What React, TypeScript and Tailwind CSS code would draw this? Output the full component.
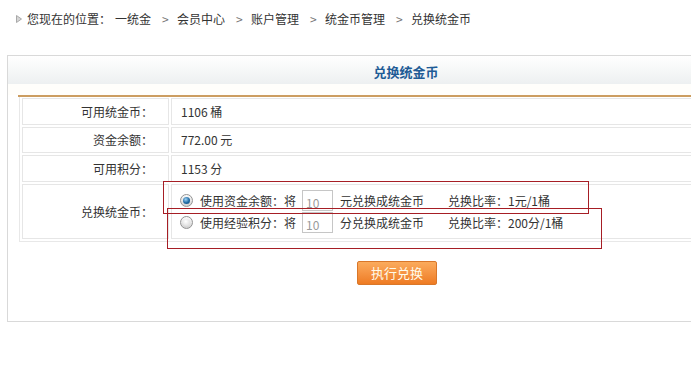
import React from "react";

function Radio({ checked }: { checked?: boolean }) {
  return (
    <span className="w-[13px] h-[13px] rounded-full border border-[#939393] bg-gradient-to-b from-[#fbfbfb] to-[#d2d2d2] flex items-center justify-center shrink-0">
      {checked ? (
        <span className="w-[7px] h-[7px] rounded-full bg-[radial-gradient(circle_at_40%_35%,#9fd3f5,#1f6aa3_55%,#154c78)]" />
      ) : (
        <span className="w-[7px] h-[7px] rounded-full bg-[radial-gradient(circle_at_40%_35%,#ffffff,#e2e2e2_70%)]" />
      )}
    </span>
  );
}

function Sep() {
  return <span className="w-[6px] ml-[11px] mr-[9px] text-center text-[#777]">&gt;</span>;
}

function ExchangeLine({
  checked,
  label,
  unit,
  rate,
}: {
  checked?: boolean;
  label: string;
  unit: string;
  rate: string;
}) {
  return (
    <div className="h-[22px] flex items-center">
      <Radio checked={checked} />
      <span className="ml-[7px] w-[96px] whitespace-nowrap">{label}</span>
      <input
        readOnly
        defaultValue="10"
        className="ml-[6px] w-[31px] h-[21px] border border-[#c6c6c6] text-[#9a9a9a] text-[12px] pl-[3px] pt-[3px] outline-none bg-white"
      />
      <span className="ml-[7px] w-[84px] whitespace-nowrap">{unit}兑换成统金币</span>
      <span className="ml-[24px] whitespace-nowrap">{rate}</span>
    </div>
  );
}

export default function App() {
  return (
    <div className="relative w-[691px] h-[387px] overflow-hidden bg-white text-[12px] text-[#333] font-['Noto_Sans_CJK_SC','Noto_Sans',sans-serif] leading-[18px]">
      {/* breadcrumb */}
      <div className="pt-[10px] pl-[16px] h-[28px] flex items-center whitespace-nowrap">
        <svg width="6" height="8" viewBox="0 0 6 8" className="mr-[5px]">
          <polygon points="0.5,0.5 5.5,4 0.5,7.5" fill="#d6d6d6" stroke="#a9a9a9" strokeWidth="1" />
        </svg>
        <span>您现在的位置：</span>
        <span className="ml-[4px]">一统金</span>
        <Sep />
        <span>会员中心</span>
        <Sep />
        <span>账户管理</span>
        <Sep />
        <span>统金币管理</span>
        <Sep />
        <span>兑换统金币</span>
      </div>

      {/* panel */}
      <div className="ml-[7px] mt-[27px] w-[798px] h-[267px] border border-[#d9d9d9]">
        <div className="h-[28px] bg-gradient-to-b from-white to-[#edf0f1] flex items-center justify-center pt-[3px] font-bold text-[#1f5c96] text-[13px]">
          兑换统金币
        </div>
        <div className="h-[11px] bg-[#fffefb]" />
        <div className="pl-[10px] pr-[20px]">
          <div className="h-[2px] bg-[#cc9d60]" />
          <div className="ml-[1px] pt-[1px] pb-[2px] pl-[2px] border-l border-b border-[#e8e8e8] grid grid-cols-[147px_1fr] grid-rows-[27px_26px_27px_55px] gap-[2px]">
            <div className="border border-[#e6e6e6] flex items-center justify-end pr-[15px]">可用统金币：</div>
            <div className="border border-[#e6e6e6] flex items-center pl-[9px]">1106 桶</div>
            <div className="border border-[#e6e6e6] flex items-center justify-end pr-[15px]">资金余额：</div>
            <div className="border border-[#e6e6e6] flex items-center pl-[9px]">772.00 元</div>
            <div className="border border-[#e6e6e6] flex items-center justify-end pr-[15px]">可用积分：</div>
            <div className="border border-[#e6e6e6] flex items-center pl-[9px]">1153 分</div>
            <div className="border border-[#e6e6e6] flex items-center justify-end pr-[15px]">兑换统金币：</div>
            <div className="border border-[#e6e6e6] flex flex-col justify-center pl-[8px]">
              <ExchangeLine checked label="使用资金余额：将" unit="元" rate="兑换比率：1元/1桶" />
              <ExchangeLine label="使用经验积分：将" unit="分" rate="兑换比率：200分/1桶" />
            </div>
          </div>
          <button className="mt-[19px] ml-[339px] w-[80px] h-[24px] rounded-[2px] border border-[#d9772a] bg-gradient-to-b from-[#fbab5c] to-[#ee7b21] text-[#fffbea] text-[13px] flex items-center justify-center">
            执行兑换
          </button>
        </div>
      </div>

      {/* annotation boxes */}
      <div className="absolute left-[163px] top-[181px] w-[426px] h-[33px] border border-[#a61e25]" />
      <div className="absolute left-[167px] top-[208px] w-[435px] h-[41px] border border-[#a61e25]" />
    </div>
  );
}
